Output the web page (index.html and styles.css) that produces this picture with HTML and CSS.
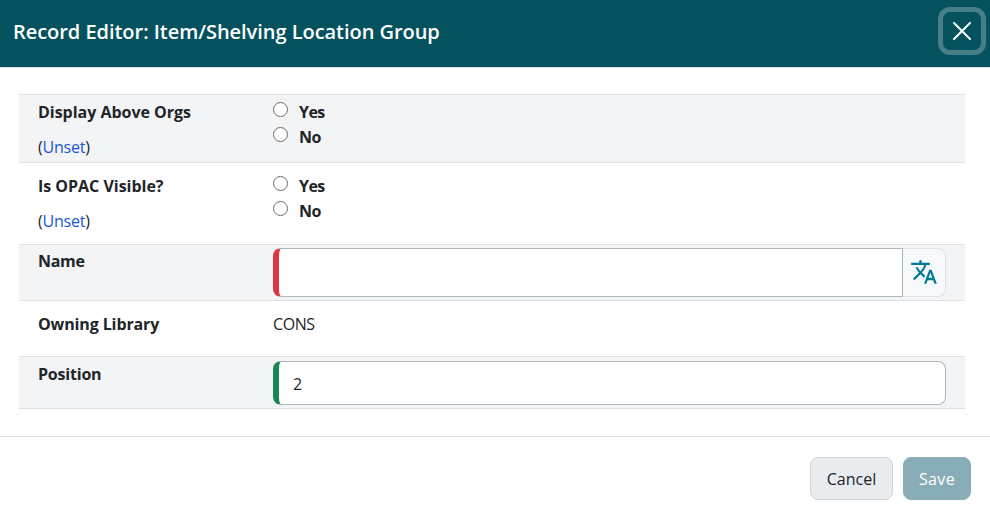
FILE: index.html
```html
<!DOCTYPE html>
<html lang="en">
<head>
<meta charset="utf-8">
<title>Record Editor</title>
<link rel="stylesheet" href="styles.css">
</head>
<body>
<header class="header">
  <h1 class="title">Record Editor: Item/Shelving Location Group</h1>
  <button class="close" aria-label="Close"><svg width="18" height="18" viewBox="0 0 18 18"><path d="M1 1L17 17M17 1L1 17"/></svg></button>
</header>
<main class="fields">
  <div class="row shaded orgs">
    <div class="label"><span class="name">Display Above Orgs</span><span class="unset">(<a>Unset</a>)</span></div>
    <div class="options">
      <label class="option"><input type="radio" name="orgs"><span>Yes</span></label>
      <label class="option"><input type="radio" name="orgs"><span>No</span></label>
    </div>
  </div>
  <div class="row opac">
    <div class="label"><span class="name">Is OPAC Visible?</span><span class="unset">(<a>Unset</a>)</span></div>
    <div class="options">
      <label class="option"><input type="radio" name="opac"><span>Yes</span></label>
      <label class="option"><input type="radio" name="opac"><span>No</span></label>
    </div>
  </div>
  <div class="row shaded name-row">
    <div class="label"><span class="name">Name</span></div>
    <div class="group">
      <input class="control invalid" type="text">
      <button class="translate" aria-label="Translate"><svg width="28" height="28" viewBox="0 0 24 24"><path d="M12.87 15.07l-2.54-2.51.03-.03A17.52 17.52 0 0 0 14.07 6H17V4h-7V2H8v2H1v1.99h11.17C11.5 7.92 10.44 9.75 9 11.35 8.07 10.32 7.3 9.19 6.69 8h-2c.73 1.63 1.73 3.17 2.98 4.56l-5.09 5.02L4 19l5-5 3.11 3.11.76-2.04zM18.5 10h-2L12 22h2l1.12-3h4.75L21 22h2l-4.5-12zm-2.62 7l1.62-4.33L19.12 17h-3.24z"/></svg></button>
    </div>
  </div>
  <div class="row library">
    <div class="label"><span class="name">Owning Library</span></div>
    <div class="value">CONS</div>
  </div>
  <div class="row shaded position">
    <div class="label"><span class="name">Position</span></div>
    <input class="control valid" type="text" value="2">
  </div>
</main>
<footer class="footer">
  <button class="btn cancel">Cancel</button>
  <button class="btn save">Save</button>
</footer>
</body>
</html>
```
FILE: styles.css
```css
* { box-sizing: border-box; }
body { margin: 0; background: #fff; color: #212529; font: 400 16px/24px "Open Sans", "Noto Sans", sans-serif; }
button, input { font: inherit; margin: 0; }
.header { display: flex; align-items: center; justify-content: space-between; height: 68px; padding: 0 4px 5px 13px; background: #05525f; border-bottom: 1px solid #dee2e6; }
.title { margin: 0; padding-top: 2px; color: #fff; font-size: 20px; line-height: 30px; font-weight: 600; letter-spacing: -.04px; white-space: nowrap; }
.close { display: flex; align-items: center; justify-content: center; width: 48px; height: 48px; padding: 0; background: none; border: 5px solid #477f89; border-radius: 12px; }
.close path { fill: none; stroke: #fff; stroke-width: 2; stroke-linecap: round; }
.fields { margin: 26px 25px 0 19px; border-bottom: 1px solid #dee2e6; }
.row { display: flex; border-top: 1px solid #dee2e6; padding: 0 19px; }
.shaded { background: #f3f4f6; }
.label { width: 235px; flex: none; }
.name { display: block; width: max-content; font-weight: 700; letter-spacing: -.02px; white-space: nowrap; }
.unset { display: block; width: max-content; margin-top: 11px; letter-spacing: -.2px; }
.unset a { color: #1a56db; }
.orgs { height: 68px; padding-top: 5px; }
.opac { height: 82px; padding-top: 11px; }
.option { display: flex; height: 25px; font-weight: 700; letter-spacing: -.6px; }
.option input { width: 15px; height: 15px; margin: 2px 11px 0 0; appearance: none; border: 1px solid #6b6b6b; border-radius: 50%; background: #fff; }
.option span { height: 24px; }
.name-row { height: 56px; padding-top: 3px; }
.name-row .name { padding-top: 1px; letter-spacing: -.3px; }
.group { display: flex; flex: 1; height: 49px; }
.control { flex: 1; min-width: 0; height: 44px; padding: 1px 14px 0; border: 1px solid #adb5bd; border-left-width: 6px; border-radius: 8px; background: #fff; color: #212529; }
.group .control { height: 49px; border-radius: 8px 0 0 8px; }
.invalid { border-left-color: #dc3545; }
.valid { border-left-color: #198754; }
.translate { display: flex; align-items: center; justify-content: center; width: 43px; padding: 0 0 2px; background: #f8f9fa; border: 1px solid #dee2e6; border-left: 0; border-radius: 0 8px 8px 0; }
.translate path { fill: #007a92; }
.library { height: 56px; padding-top: 11px; }
.library .name { letter-spacing: -.12px; }
.value { letter-spacing: -.4px; }
.position { height: 52px; padding-top: 4px; }
.position .name { padding-top: 1px; letter-spacing: -.2px; }
.footer { display: flex; justify-content: flex-end; gap: 10px; height: 78px; margin-top: 27px; padding: 20px 19px 0 0; border-top: 1px solid #dee2e6; }
.btn { height: 43px; padding: 0; border: 1px solid #ced4da; border-radius: 8px; }
.cancel { width: 83px; background: #e9ecef; color: #212529; }
.save { width: 68px; background: #88adb6; border-color: #88adb6; color: #fff; letter-spacing: .4px; }
```
